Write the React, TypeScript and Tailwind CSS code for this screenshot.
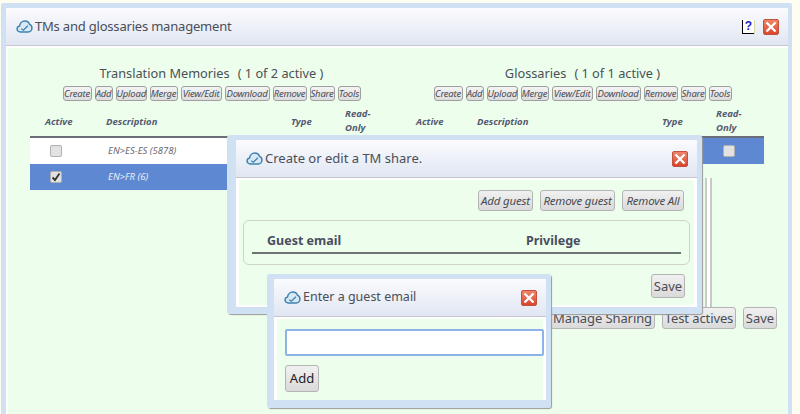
import React from "react";

const tools = [
  { label: "Create", width: "w-[29px]" },
  { label: "Add", width: "w-[18px]" },
  { label: "Upload", width: "w-[31px]" },
  { label: "Merge", width: "w-[28px]" },
  { label: "View/Edit", width: "w-[41px]" },
  { label: "Download", width: "w-[45px]" },
  { label: "Remove", width: "w-[34px]" },
  { label: "Share", width: "w-[25px]" },
  { label: "Tools", width: "w-[23px]" },
];

function CloudIcon() {
  return (
    <svg width="17" height="13" viewBox="0 0 18 14" className="shrink-0">
      <path
        d="M4.5 12.8C2.4 12.8 1 11.4 1 9.6c0-1.6 1.1-2.8 2.6-3C4 3.6 6.4 1.2 9.4 1.2c2.4 0 4.3 1.4 5 3.5 1.6.4 2.6 2 2.6 3.8 0 2.4-1.7 4.3-4 4.3H4.5Z"
        fill="#d8e8f4"
        stroke="#3f82ad"
        strokeWidth="1.6"
      />
      <path d="M5.5 9.4 7.8 11l4.8-4.8" fill="none" stroke="#3f82ad" strokeWidth="1.4" />
    </svg>
  );
}

function CloseIcon() {
  return (
    <div className="flex h-[16px] w-[16px] shrink-0 items-center justify-center rounded-[2px] border border-[#c4513a] bg-gradient-to-b from-[#ee8468] to-[#d8452c]">
      <svg width="12" height="12" viewBox="0 0 12 12">
        <path d="M1.5 1.5 10.5 10.5M10.5 1.5 1.5 10.5" stroke="#ffffff" strokeWidth="2.4" />
      </svg>
    </div>
  );
}

function HelpIcon() {
  return (
    <div className="flex h-[14px] w-[12px] items-center justify-center border-b border-l border-black bg-white font-['Liberation_Sans',sans-serif] text-[12px] leading-none font-bold text-[#1a1ac8] shadow-[1px_0_0_#d8d8a0]">
      ?
    </div>
  );
}

function TitleBar({ children }: { children: React.ReactNode }) {
  return (
    <div className="flex h-[38px] items-center border-b border-[#c4c6cc] bg-gradient-to-b from-[#fbfbfe] to-[#e0e6f2] text-[#4a4e58]">
      {children}
    </div>
  );
}

function SmallButton({ label, width }: { label: string; width: string }) {
  return (
    <button className={`h-[15px] rounded-[3px] border border-[#9f9f9f] bg-gradient-to-b from-[#f4f4f4] to-[#dcdcdc] text-[9.5px] leading-none tracking-[-0.2px] whitespace-nowrap text-[#484b55] italic ${width}`}>
      {label}
    </button>
  );
}

function Button({ label, className }: { label: string; className: string }) {
  return (
    <button className={`rounded-[3px] border border-[#b4b4b4] bg-gradient-to-b from-[#f1f1f1] to-[#dadada] leading-none whitespace-nowrap text-[#4a4d55] ${className}`}>
      {label}
    </button>
  );
}

function Checkbox({ checked }: { checked?: boolean }) {
  return (
    <div className="flex h-[12px] w-[12px] items-center justify-center rounded-[2px] border border-[#b0b0b0] bg-[#e2e2e2]">
      {checked && (
        <svg width="10" height="10" viewBox="0 0 10 10">
          <path d="M1.5 5.5 4 8l4.5-6.5" fill="none" stroke="#333" strokeWidth="1.8" />
        </svg>
      )}
    </div>
  );
}

function ColumnHeads() {
  return (
    <div className="flex h-[29px] items-center text-[9.5px] leading-[13.5px] font-bold text-[#555a72] italic">
      <div className="w-[76px] pl-[15px]">Active</div>
      <div className="w-[185px]">Description</div>
      <div className="w-[54px]">Type</div>
      <div className="-mt-[2px] w-[40px]">
        Read-
        <br />
        Only
      </div>
    </div>
  );
}

function Panel({ title, active }: { title: string; active: string }) {
  return (
    <div className="w-[363px]">
      <div className="h-[16px] text-center text-[12.75px] leading-[16px] text-[#4a4f58]">
        {title}
        <span className="ml-[8px]">( {active} active )</span>
      </div>
      <div className="mt-[5px] flex justify-center gap-[3px]">
        {tools.map((t) => (
          <SmallButton key={t.label} label={t.label} width={t.width} />
        ))}
      </div>
      <div className="mt-[6px]">
        <ColumnHeads />
      </div>
      <div className="border-t-2 border-[#6b6e78]" />
    </div>
  );
}

export default function App() {
  return (
    <div className="h-[414px] w-[800px] overflow-hidden bg-[#fdfdf1] pt-[3px] pr-[8px] pl-[1px] font-['Noto_Sans',sans-serif]">
      {/* main window */}
      <div className="relative h-[411px] rounded-t-[3px] border-[5px] border-r-[4px] border-b-0 border-[#cfe1f3]">
        <TitleBar>
          <div className="flex w-full items-center pr-[9px] pl-[10px]">
            <CloudIcon />
            <span className="ml-[2px] flex-1 text-[13px] tracking-[-0.2px]">TMs and glossaries management</span>
            <HelpIcon />
            <div className="ml-[9px]">
              <CloseIcon />
            </div>
          </div>
        </TitleBar>
        <div className="h-[368px] border-t-2 border-l-2 border-white bg-[#edffec] pt-[17px] pl-[22px]">
          <div className="h-[242px]">
            <div className="flex gap-[8px]">
              <div>
                <Panel title="Translation Memories" active="1 of 2" />
                <div className="flex h-[26px] items-center bg-white pl-[20px]">
                  <Checkbox />
                  <span className="pl-[46px] text-[9.5px] text-[#6a6a72] italic">EN&gt;ES-ES (5878)</span>
                </div>
                <div className="flex h-[26px] items-center bg-[#5f88d2] pl-[20px]">
                  <Checkbox checked />
                  <span className="pl-[46px] text-[9.5px] text-[#e6eefa] italic">EN&gt;FR (6)</span>
                </div>
              </div>
              <div>
                <Panel title="Glossaries" active="1 of 1" />
                <div className="flex h-[26px] items-center bg-[#5f88d2] pl-[322px]">
                  <Checkbox />
                </div>
                <div className="mt-[14px] ml-[304px] h-[132px] w-[7px] border-x-2 border-[#c8cac8] bg-white" />
                <div className="ml-[304px] h-[5px] w-[7px] bg-[#cfe1f3]" />
              </div>
            </div>
          </div>
          <div className="flex justify-end gap-[7px] pr-[11px]">
            <Button label="Manage Sharing" className="h-[22px] w-[105px] text-[13px] tracking-[-0.1px]" />
            <Button label="Test actives" className="h-[22px] w-[74px] text-[13px] tracking-[-0.1px]" />
            <Button label="Save" className="h-[22px] w-[34px] text-[13px]" />
          </div>
        </div>

        {/* share dialog */}
        <div className="absolute top-[127px] left-[221px] h-[179px] w-[475px] rounded-[3px] border-[5px] border-b-[7px] border-l-[9px] border-[#cfe1f3] shadow-[1px_1px_1px_#9a9a9a]">
          <TitleBar>
            <div className="flex w-full items-center pr-[9px] pl-[10px]">
              <CloudIcon />
              <span className="ml-[2px] flex-1 text-[13px]">Create or edit a TM share.</span>
              <CloseIcon />
            </div>
          </TitleBar>
          <div className="h-[129px] border-x-[3px] border-y-2 border-white bg-[#edffec] px-[4px] pt-[10px]">
            <div className="flex justify-end gap-[7px] pr-[6px]">
              <Button label="Add guest" className="h-[21px] w-[55px] text-[11.5px] tracking-[-0.2px] italic" />
              <Button label="Remove guest" className="h-[21px] w-[75px] text-[11.5px] tracking-[-0.2px] italic" />
              <Button label="Remove All" className="h-[21px] w-[62px] text-[11.5px] tracking-[-0.2px] italic" />
            </div>
            <div className="mt-[9px] h-[45px] rounded-[6px] border border-[#cfd3cc] px-[8px] pt-[11px]">
              <div className="flex h-[22px] border-b-2 border-[#6f7472] text-[12.5px] leading-[18px] font-bold text-[#4a4d60]">
                <div className="w-[274px] pl-[15px]">Guest email</div>
                <div>Privilege</div>
              </div>
            </div>
            <div className="mt-[9px] flex justify-end pr-[5px]">
              <Button label="Save" className="h-[24px] w-[34px] text-[13px]" />
            </div>
          </div>
        </div>

        {/* guest email dialog */}
        <div className="absolute top-[266px] left-[261px] h-[134px] w-[284px] rounded-[3px] border-[5px] border-b-[8px] border-l-[7px] border-[#cfe1f3] shadow-[1px_1px_1px_#9a9a9a]">
          <TitleBar>
            <div className="flex w-full items-center pr-[9px] pl-[10px]">
              <CloudIcon />
              <span className="ml-[2px] flex-1 text-[12.5px]">Enter a guest email</span>
              <CloseIcon />
            </div>
          </TitleBar>
          <div className="h-[83px] border-x-[3px] border-t-2 border-white bg-[#edffec] pt-[10px] pl-[8px]">
            <input className="block h-[27px] w-[259px] rounded-[2px] border-2 border-[#8db2ea] bg-white" />
            <Button label="Add" className="mt-[9px] h-[27px] w-[34px] text-[13px] !text-[#222]" />
          </div>
        </div>
      </div>
    </div>
  );
}
